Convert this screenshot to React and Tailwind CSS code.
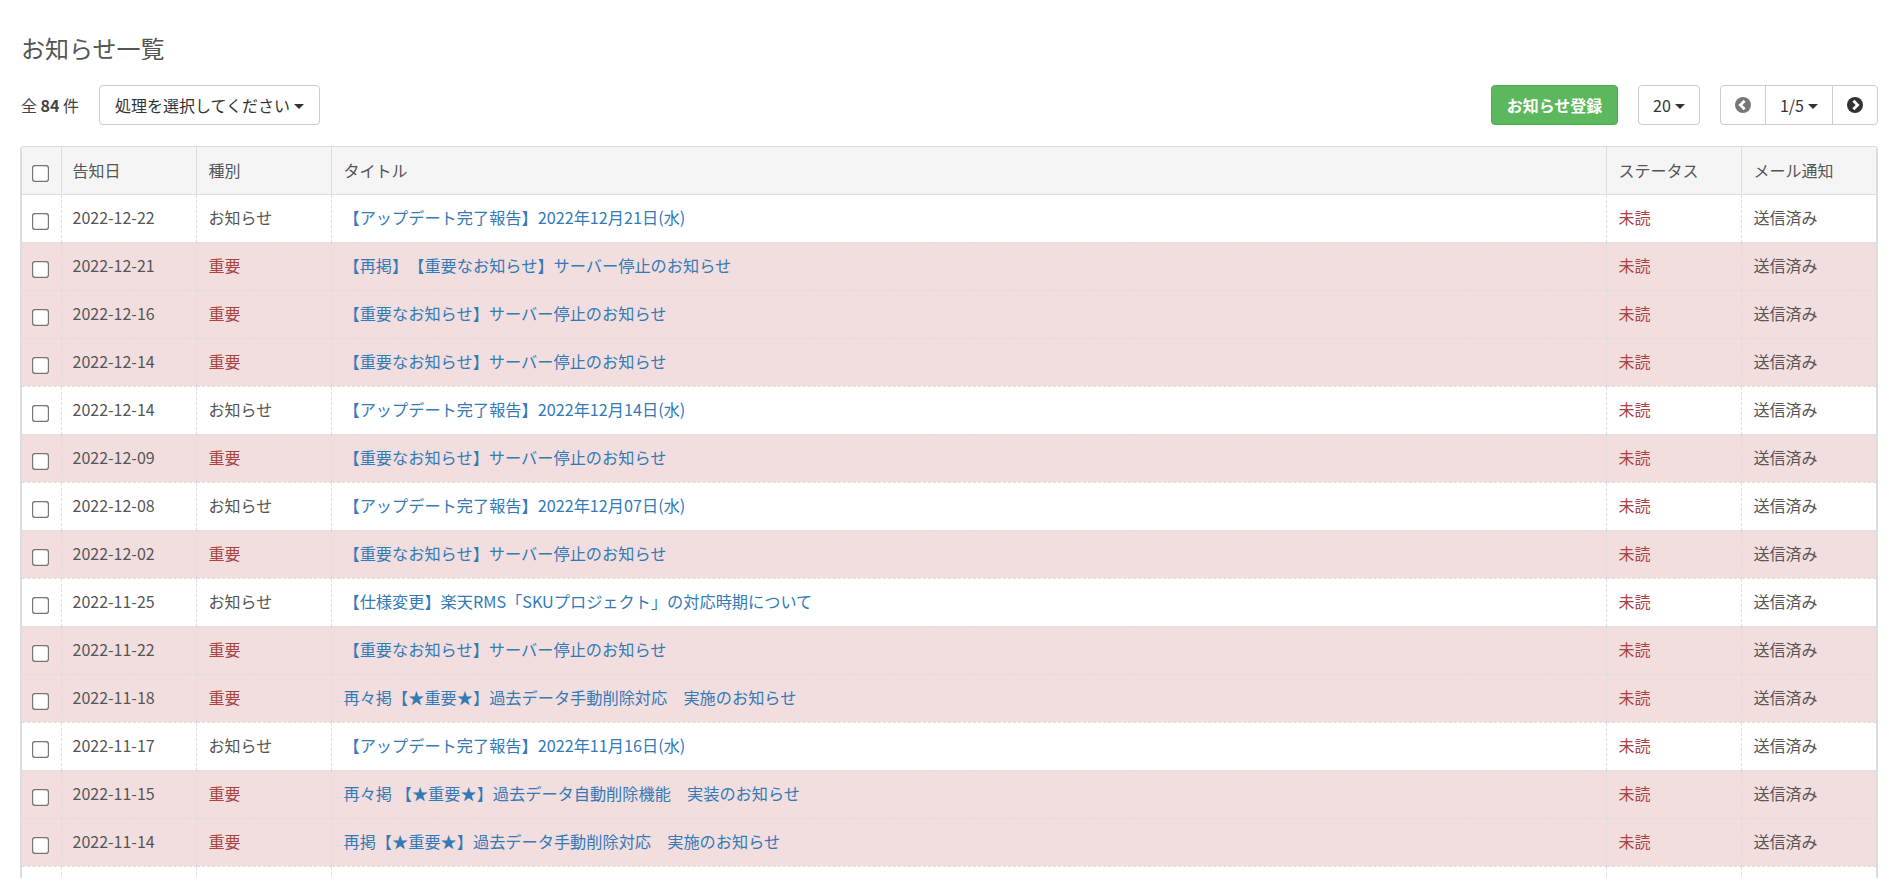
const FONT = "font-['Noto_Sans_CJK_JP','Noto_Sans',sans-serif]";

const A = "【アップデート完了報告】";
const S = "【重要なお知らせ】サーバー停止のお知らせ";
const rows = [
  ["2022-12-22", 0, A + "2022年12月21日(水)"],
  ["2022-12-21", 1, "【再掲】【重要なお知らせ】サーバー停止のお知らせ"],
  ["2022-12-16", 1, S],
  ["2022-12-14", 1, S],
  ["2022-12-14", 0, A + "2022年12月14日(水)"],
  ["2022-12-09", 1, S],
  ["2022-12-08", 0, A + "2022年12月07日(水)"],
  ["2022-12-02", 1, S],
  ["2022-11-25", 0, "【仕様変更】楽天RMS「SKUプロジェクト」の対応時期について"],
  ["2022-11-22", 1, S],
  ["2022-11-18", 1, "再々掲【★重要★】過去データ手動削除対応　実施のお知らせ"],
  ["2022-11-17", 0, A + "2022年11月16日(水)"],
  ["2022-11-15", 1, "再々掲 【★重要★】過去データ自動削除機能　実装のお知らせ"],
  ["2022-11-14", 1, "再掲【★重要★】過去データ手動削除対応　実施のお知らせ"],
];

function Caret() {
  return <span className="inline-block ml-[4px] mt-[2px] align-middle w-0 h-0 border-x-[5px] border-x-transparent border-t-[5px] border-t-[#333]" />;
}

function Chevron({ dir, color }) {
  return (
    <svg width="16" height="16" viewBox="0 0 16 16">
      <circle cx="8" cy="8" r="8" fill={color} />
      <path
        d={dir === "left" ? "M9.6 3.8 L5.4 8 L9.6 12.2" : "M6.4 3.8 L10.6 8 L6.4 12.2"}
        fill="none"
        stroke="#fff"
        strokeWidth="2.8"
      />
    </svg>
  );
}

const btn = "inline-flex items-center justify-center h-10 bg-white border border-[#ccc] text-[16px] text-[#333]";

function Check() {
  return <input type="checkbox" className="block w-[13px] h-[13px] m-0 ml-[12px] mt-[7px] scale-[1.33]" />;
}

const dashed = "border-b border-dashed border-[#ddd]";

export default function App() {
  return (
    <div className={`${FONT} [text-spacing-trim:space-all] h-[878px] overflow-hidden bg-white text-[16px] text-[#555] pl-5 pr-[16px]`}>
      <h1 className="m-0 pt-[30px] h-[85px] text-[24px] leading-[36px] font-normal text-[#555] ml-[1px]">お知らせ一覧</h1>
      <div className="flex items-center h-10 mb-[21px]">
        <span className="text-[#444] w-[79px] ml-[1px] -mr-px">全 <b className="font-bold">84</b> 件</span>
        <button className={`${btn} w-[221px] rounded-[4px]`}>処理を選択してください<Caret /></button>
        <div className="ml-auto flex items-center">
          <button className="inline-flex items-center justify-center h-10 w-[127px] rounded-[4px] bg-[#5cb85c] border border-[#4cae4c] text-white font-bold text-[16px]">お知らせ登録</button>
          <button className={`${btn} w-[62px] rounded-[4px] ml-[20px]`}>20<Caret /></button>
          <div className="flex ml-[20px]">
            <button className={`${btn} w-[46px] rounded-l-[4px]`}><Chevron dir="left" color="#777" /></button>
            <button className={`${btn} w-[68px] -ml-px`}>1/5<Caret /></button>
            <button className={`${btn} w-[46px] -ml-px rounded-r-[4px]`}><Chevron dir="right" color="#333" /></button>
          </div>
        </div>
      </div>
      <div className="border border-[#ddd] border-l-2 border-r-2 rounded-[4px] overflow-hidden">
        <table className="w-full table-fixed border-collapse">
          <colgroup>
            <col className="w-[39px]" />
            <col className="w-[135px]" />
            <col className="w-[135px]" />
            <col />
            <col className="w-[135px]" />
            <col className="w-[135px]" />
          </colgroup>
          <thead>
            <tr className="h-[47px] bg-[#f5f5f5] text-left">
              <th className="p-0 border-r border-b border-[#ddd] font-normal"><Check /></th>
              {["告知日", "種別", "タイトル", "ステータス", "メール通知"].map((t, i) => (
                <th key={t} className={`${i === 0 ? "pl-[11px] pr-3" : "px-3"} border-b border-[#ddd] font-normal ${i < 4 ? "border-r" : ""}`}>{t}</th>
              ))}
            </tr>
          </thead>
          <tbody>
            {rows.map(([date, imp, title], i) => (
              <tr key={i} className={`h-12 ${imp ? "bg-[#f2dede]" : "bg-white"}`}>
                <td className={`p-0 border-r ${dashed}`}><Check /></td>
                <td className={`pl-[11px] pr-3 pb-[3px] border-r ${dashed}`}>{date}</td>
                <td className={`px-3 pb-[3px] border-r ${dashed} ${imp ? "text-[#a94442]" : ""}`}>{imp ? "重要" : "お知らせ"}</td>
                <td className={`px-3 pb-[1px] border-r ${dashed} text-[#337ab7] text-[16.2px]`}><a>{title}</a></td>
                <td className={`px-3 pb-[3px] border-r ${dashed} text-[#a94442]`}>未読</td>
                <td className={`px-3 pb-[3px] ${dashed}`}>送信済み</td>
              </tr>
            ))}
            <tr className="h-12 bg-white">
              <td className="border-r border-dashed border-[#ddd]" />
              <td className="border-r border-dashed border-[#ddd]" />
              <td className="border-r border-dashed border-[#ddd]" />
              <td className="border-r border-dashed border-[#ddd]" />
              <td className="border-r border-dashed border-[#ddd]" />
              <td />
            </tr>
          </tbody>
        </table>
      </div>
    </div>
  );
}
